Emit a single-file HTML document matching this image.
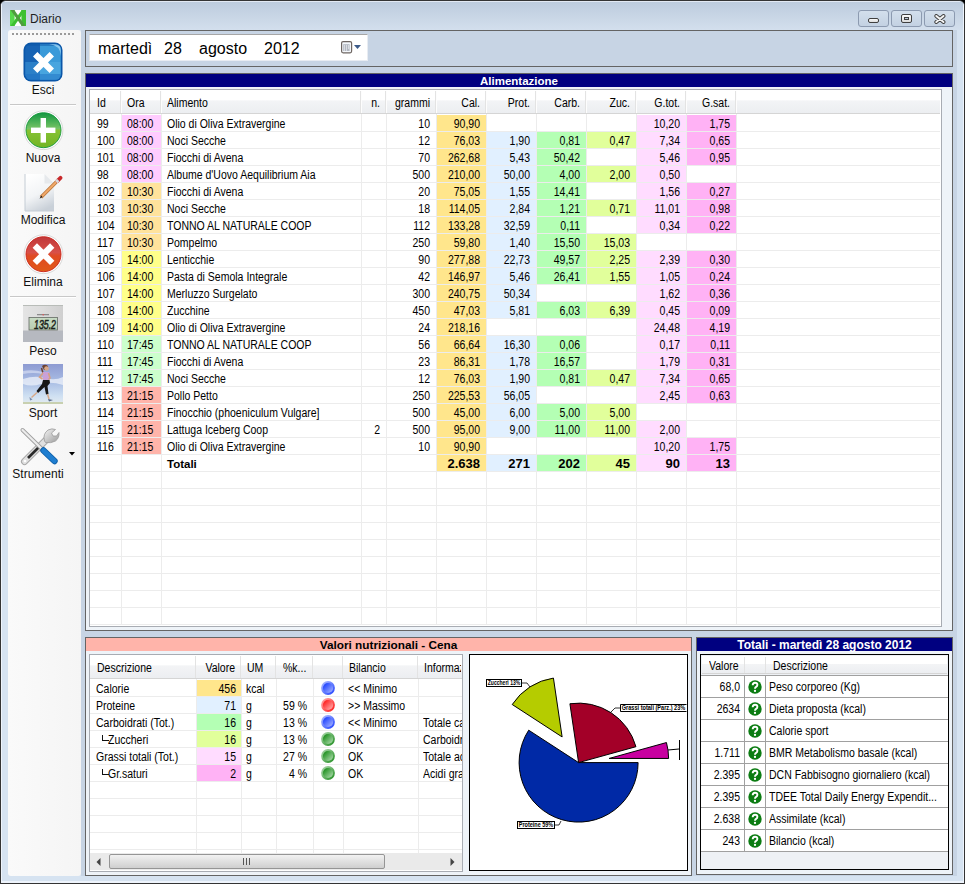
<!DOCTYPE html><html><head><meta charset="utf-8"><style>
*{box-sizing:border-box;margin:0;padding:0}
html,body{width:965px;height:884px;overflow:hidden;background:#000;font-family:"Liberation Sans", sans-serif;color:#000}
.a{position:absolute}
.t{position:absolute;white-space:pre;line-height:16px;font-size:12px;padding-top:1px;transform:scaleX(0.875);transform-origin:0 0}
.t.r{transform-origin:100% 0}
.t.c{transform-origin:50% 0}
.t.n{transform:none}
.r{text-align:right}
.c{text-align:center}
.hd{position:absolute;background:linear-gradient(#fff 0,#fff 45%,#f3f4f6 46%,#eceef1 100%)}
</style></head><body>
<div class="a" style="left:0;top:0;width:965px;height:884px;border:1px solid #343434;border-radius:6px 6px 0 0;background:#d6e3f1;overflow:hidden">
<div class="a" style="left:0;top:0;width:963px;height:29px;background:linear-gradient(#bccbdd,#d3dfed)"></div>
<div class="a" style="left:4px;top:0;width:955px;height:1px;background:#e2e9f3"></div>
<div class="a" style="left:0;top:0;width:1px;height:882px;background:#eef4fc"></div>
<div class="a" style="left:962px;top:0;width:1px;height:882px;background:#eef4fc"></div>
<div class="a" style="left:0;top:880px;width:963px;height:2px;background:#eef4fc"></div>
</div>
<svg class="a" style="left:10px;top:10px" width="16" height="16" viewBox="0 0 16 16">
<rect x="0" y="0" width="16" height="16" fill="#fff"/>
<rect x="0" y="0" width="4.6" height="16" fill="#56d84b"/><rect x="11.4" y="0" width="4.6" height="16" fill="#3cc031"/>
<path d="M0.5 16 L4.3 16 L15.5 0 L11.7 0 Z" fill="#3cc031"/>
<path d="M0.5 0 L4.3 0 L15.5 16 L11.7 16 Z" fill="#4f9c3f"/>
</svg>
<div class="t n" style="left:30px;top:10px;font-size:12px;line-height:16px;color:#1e1e1e">Diario</div>
<div class="a" style="left:858px;top:10px;width:31px;height:17px;border:1px solid #8c9ab0;border-radius:3px;background:linear-gradient(#d3dfec,#c3d1e2)"><div class="a" style="left:9px;top:7px;width:11px;height:5px;background:linear-gradient(#fafafa,#dcdcdc);border:1px solid #404040;border-radius:2px"></div></div>
<div class="a" style="left:891px;top:10px;width:31px;height:17px;border:1px solid #8c9ab0;border-radius:3px;background:linear-gradient(#d3dfec,#c3d1e2)"><div class="a" style="left:9px;top:3px;width:11px;height:9px;border:1px solid #404040;border-radius:2px;background:linear-gradient(#fafafa,#dcdcdc)"><div class="a" style="left:2px;top:2px;width:5px;height:3px;border:1px solid #404040;background:#b8c4d4"></div></div></div>
<div class="a" style="left:924px;top:10px;width:31px;height:17px;border:1px solid #8c9ab0;border-radius:3px;background:linear-gradient(#d3dfec,#c3d1e2)"><svg class="a" style="left:9px;top:3px" width="12" height="10" viewBox="0 0 12 10"><path d="M2.3 2 L9.5 8 M9.5 2 L2.3 8" stroke="#404040" stroke-width="3.9" stroke-linecap="round"/><path d="M2.3 2 L9.5 8 M9.5 2 L2.3 8" stroke="#f4f4f4" stroke-width="2" stroke-linecap="round"/></svg></div>
<div class="a" style="left:81px;top:30px;width:876px;height:846px;background:#c7d4e4"></div>
<div class="a" style="left:8px;top:30px;width:73px;height:846px;border-radius:3px;background:linear-gradient(90deg,#fafafa,#f5f5f5)"></div>
<div class="a" style="left:12px;top:33px;width:62px;height:2px;background:repeating-linear-gradient(90deg,#9a9a9a 0,#9a9a9a 2px,transparent 2px,transparent 4px)"></div>
<div class="a" style="left:10px;top:104px;width:66px;height:1px;background:#c8c8c8"></div><div class="a" style="left:10px;top:105px;width:66px;height:1px;background:#fff"></div>
<div class="a" style="left:10px;top:296px;width:66px;height:1px;background:#c8c8c8"></div><div class="a" style="left:10px;top:297px;width:66px;height:1px;background:#fff"></div>
<svg class="a" style="left:23px;top:42px" width="40" height="40" viewBox="0 0 40 40">
<defs><clipPath id="ec"><rect x="2.2" y="2.2" width="35.6" height="35.6" rx="5.5"/></clipPath>
<linearGradient id="eh" x1="0" y1="0" x2="1" y2="1"><stop offset="0" stop-color="#fff" stop-opacity="0"/><stop offset="1" stop-color="#fff" stop-opacity="0.35"/></linearGradient></defs>
<rect x="0.5" y="0.5" width="39" height="39" rx="7.5" fill="#0a56a8"/>
<g clip-path="url(#ec)">
<rect x="0" y="0" width="17" height="20" fill="#1763b4"/>
<rect x="17" y="0" width="23" height="20" fill="#3a9ad9"/>
<rect x="0" y="20" width="17" height="20" fill="#2c80c8"/>
<rect x="17" y="20" width="23" height="20" fill="#48a5df"/>
<rect x="0" y="32" width="40" height="8" fill="#1a6cc0" opacity="0.45"/>
<rect x="0" y="0" width="40" height="4" fill="#0d58a8" opacity="0.5"/>
<path d="M26 2 Q37 3 38 14 L38 2 Z" fill="#9fd6f6" opacity="0.8"/>
</g>
<path d="M12.2 12.2 L28.8 28.8 M28.8 12.2 L12.2 28.8" stroke="#fff" stroke-width="6.2"/>
</svg>
<div class="t c n" style="left:3px;top:81px;width:80px;font-size:12px;line-height:16px;color:#111">Esci</div>
<svg class="a" style="left:23px;top:110px" width="41" height="41" viewBox="0 0 41 41">
<defs><linearGradient id="ng" x1="0" y1="0" x2="0" y2="1"><stop offset="0" stop-color="#119640"/><stop offset="0.46" stop-color="#78c466"/><stop offset="0.5" stop-color="#86c234"/><stop offset="1" stop-color="#72b424"/></linearGradient></defs>
<circle cx="20.5" cy="20.2" r="19.4" fill="#fff" stroke="#cfcfcf" stroke-width="0.8"/>
<circle cx="20.5" cy="20.2" r="17.5" fill="url(#ng)" stroke="#12963a" stroke-width="0.9"/>
<rect x="17.6" y="8" width="5.4" height="24.6" fill="#fff"/>
<rect x="8" y="17.6" width="24.4" height="5.4" fill="#fff"/>
</svg>
<div class="t c n" style="left:3px;top:149px;width:80px;font-size:12px;line-height:16px;color:#111">Nuova</div>
<svg class="a" style="left:23px;top:173px" width="40" height="40" viewBox="0 0 40 40">
<defs><linearGradient id="mg" x1="0.2" y1="0" x2="0.6" y2="1"><stop offset="0" stop-color="#ffffff"/><stop offset="0.55" stop-color="#f2f4f6"/><stop offset="1" stop-color="#c9d0d8"/></linearGradient></defs>
<path d="M2 1 L21.5 1 L31 10.5 L31 38 L2 38 Z" fill="url(#mg)"/>
<path d="M2 1 L2 38 L31 38" fill="none" stroke="#c4ccd4" stroke-width="1"/>
<path d="M21.5 1 L21.5 10.5 L31 10.5 Z" fill="#e6e9ec"/>
<path d="M18 24.3 L35.5 6.8" stroke="#b8743a" stroke-width="3.6" stroke-linecap="butt"/>
<path d="M18 24.3 L35.5 6.8" stroke="#f0a868" stroke-width="2"/>
<path d="M34.5 7.8 L37.5 4.8" stroke="#c8282a" stroke-width="3.8" stroke-linecap="round"/>
<path d="M33.2 9.1 L35.2 7.1" stroke="#d8d8d8" stroke-width="3.6"/>
<path d="M16.5 25.8 L18.3 22.6 L19.6 24.0 Z" fill="#222"/>
</svg>
<div class="t c n" style="left:3px;top:211px;width:80px;font-size:12px;line-height:16px;color:#111">Modifica</div>
<svg class="a" style="left:23px;top:234px" width="41" height="41" viewBox="0 0 41 41">
<defs><linearGradient id="rg" x1="0" y1="0" x2="0" y2="1"><stop offset="0" stop-color="#c0383a"/><stop offset="0.45" stop-color="#d85048"/><stop offset="0.55" stop-color="#e04a22"/><stop offset="1" stop-color="#e05a18"/></linearGradient></defs>
<circle cx="20.5" cy="20.2" r="19.4" fill="#fff" stroke="#cfcfcf" stroke-width="0.8"/>
<circle cx="20.5" cy="20.2" r="17.5" fill="url(#rg)" stroke="#c8241a" stroke-width="0.9"/>
<path d="M11.8 11.5 L29.2 28.9 M29.2 11.5 L11.8 28.9" stroke="#fff" stroke-width="6.2"/>
</svg>
<div class="t c n" style="left:3px;top:273px;width:80px;font-size:12px;line-height:16px;color:#111">Elimina</div>
<svg class="a" style="left:23px;top:305px" width="40" height="37" viewBox="0 0 40 37">
<defs><linearGradient id="pg" x1="0" y1="0" x2="1" y2="0"><stop offset="0" stop-color="#e4e4e4"/><stop offset="0.5" stop-color="#dcdcdc"/><stop offset="1" stop-color="#cfcfcf"/></linearGradient>
<linearGradient id="pg2" x1="0" y1="0" x2="0" y2="1"><stop offset="0" stop-color="#c8dcc4"/><stop offset="1" stop-color="#b8ccb0"/></linearGradient></defs>
<rect width="40" height="37" fill="url(#pg)"/>
<rect x="0" y="0" width="40" height="1" fill="#b8bcb8"/>
<rect x="0" y="25.5" width="40" height="11.5" fill="#b6b9c0"/>
<rect x="14" y="9.2" width="12" height="1" fill="#777"/><rect x="19.5" y="9" width="1.5" height="1.4" fill="#d06060"/>
<rect x="6" y="12.5" width="28.5" height="12.5" fill="url(#pg2)" stroke="#646a64" stroke-width="0.8"/>
<text x="22" y="24" font-family="Liberation Sans" font-size="12.5" font-style="italic" text-anchor="middle" fill="#1a221a" textLength="22" lengthAdjust="spacingAndGlyphs" stroke="#1a221a" stroke-width="0.5">135.2</text>
</svg>
<div class="t c n" style="left:3px;top:342px;width:80px;font-size:12px;line-height:16px;color:#111">Peso</div>
<svg class="a" style="left:23px;top:364px" width="40" height="40" viewBox="0 0 40 40">
<defs><linearGradient id="sg" x1="0" y1="0" x2="0" y2="1"><stop offset="0" stop-color="#8e9bd2"/><stop offset="0.45" stop-color="#a9bde4"/><stop offset="0.8" stop-color="#cfe0f2"/><stop offset="1" stop-color="#e4ecf0"/></linearGradient></defs>
<rect width="40" height="40" fill="url(#sg)"/>
<path d="M0 15 Q12 11 22 14 T40 13 L40 21 Q28 17 18 20 T0 20Z" fill="#eef2fa" opacity="0.75"/>
<path d="M0 7 Q10 5 20 8 L20 10 Q10 8 0 10Z" fill="#dfe6f6" opacity="0.6"/>
<path d="M19 2 Q22 -0.5 25 2 L25 6 L21 6 Z" fill="#6a4030"/>
<circle cx="23.5" cy="4.5" r="2.3" fill="#d8a888"/>
<path d="M18.5 4 L20 9" stroke="#6a4030" stroke-width="1.5"/>
<path d="M19.5 8 L26 8 L26.5 16 L20 16 Z" fill="#c9a0d8"/>
<path d="M20 9 L16.5 13 L19.5 15" stroke="#d8a080" stroke-width="1.6" fill="none"/>
<path d="M25.5 9 L27 14 L25.5 15.5" stroke="#d8a080" stroke-width="1.6" fill="none"/>
<path d="M20 16 L26.5 16 L27 19 L24.5 22 L25.5 30 L23 30.5 L21.5 23 L15 29 L13.5 27 L19 20 Z" fill="#161616"/>
<path d="M14 28.5 L8.5 33.5" stroke="#d8a888" stroke-width="1.5"/>
<path d="M24.5 30 L26 35" stroke="#d8a888" stroke-width="1.5"/>
<path d="M6.5 33 L9.5 35.5 L7 36.5 Z" fill="#7a8aa8"/>
<path d="M25 35 L30 36 L26 37.5 Z" fill="#5a6a88"/>
<rect x="0" y="38" width="40" height="2" fill="#c8d0b0"/>
</svg>
<div class="t c n" style="left:3px;top:404px;width:80px;font-size:12px;line-height:16px;color:#111">Sport</div>
<svg class="a" style="left:18px;top:424px" width="44" height="42" viewBox="0 0 44 42">
<defs><linearGradient id="wg" x1="0" y1="0" x2="1" y2="1"><stop offset="0" stop-color="#f4f4f4"/><stop offset="1" stop-color="#9a9a9a"/></linearGradient></defs>
<path d="M6.5 37.5 L28 16" stroke="#a8a8a8" stroke-width="7" stroke-linecap="round"/>
<path d="M6.5 37.5 L28 16" stroke="#e0e0e0" stroke-width="5" stroke-linecap="round"/>
<path d="M10 34 L22.5 21.5" stroke="#2a2a2a" stroke-width="2.6"/>
<circle cx="7" cy="37" r="1.3" fill="#fff"/>
<path d="M26.5 17 Q24.5 10 30 6 Q34 4 37.5 5.5 L33.5 9 L35 12 L38.5 12 L41 8.5 Q41.5 14 37.5 17 Q33 19.5 27.5 18.5 Z" fill="url(#wg)" stroke="#9a9a9a" stroke-width="0.8"/>
<path d="M4.5 6 L25 26" stroke="#a0a0a0" stroke-width="4" stroke-linecap="round"/>
<path d="M4.5 6 L25 26" stroke="#ececec" stroke-width="2.2" stroke-linecap="round"/>
<path d="M25.5 26.5 L36.5 37" stroke="#0f5fa8" stroke-width="6.4" stroke-linecap="round"/>
<path d="M25.5 26.5 L36.5 37" stroke="#1f7ed0" stroke-width="4.6" stroke-linecap="round"/>
</svg>
<svg class="a" style="left:68.5px;top:452px" width="6" height="4" viewBox="0 0 6 4"><path d="M0 0 L6 0 L3 3.5Z" fill="#000"/></svg>
<div class="t c n" style="left:-2px;top:465px;width:80px;font-size:12px;line-height:16px;color:#111">Strumenti</div>
<div class="a" style="left:85px;top:30px;width:868px;height:37px;border:1px solid #646464;background:#c7d4e4"></div>
<div class="a" style="left:89px;top:34px;width:279px;height:27px;background:#fff;border-top:1px solid #a6a6a6;border-left:1px solid #e3e3e3;border-right:1px solid #e8ecf2;border-bottom:1px solid #e8ecf2"></div>
<div class="t n" style="left:98px;top:38px;font-size:16px;line-height:20px;color:#000">martedì</div>
<div class="t n" style="left:164px;top:38px;font-size:16px;line-height:20px;color:#000">28</div>
<div class="t n" style="left:199px;top:38px;font-size:16px;line-height:20px;color:#000">agosto</div>
<div class="t n" style="left:264px;top:38px;font-size:16px;line-height:20px;color:#000">2012</div>
<svg class="a" style="left:341px;top:41px" width="21" height="13" viewBox="0 0 21 13">
<rect x="0.6" y="0.6" width="10" height="11.2" rx="1.5" fill="#f4f7fb" stroke="#6e6662" stroke-width="1.2"/>
<rect x="2.2" y="3.2" width="6.4" height="6.8" fill="#b4b9c2"/>
<path d="M3 4.4h1v1h-1zM5 4.4h1v1h-1zM7 4.4h1v1h-1zM3 6.6h1v1h-1zM5 6.6h1v1h-1zM7 6.6h1v1h-1zM3 8.6h1v1h-1zM5 8.6h1v1h-1z" fill="#fff"/>
<path d="M13 4 L20 4 L16.5 8 Z" fill="#3c5a88"/>
</svg>
<div class="a" style="left:85px;top:73px;width:868px;height:558px;border:1px solid #646464;background:#eef3f8"></div>
<div class="a" style="left:86px;top:74px;width:866px;height:13px;background:#000080"></div>
<div class="t c n" style="left:86px;top:73px;width:866px;font-size:11.5px;line-height:15px;font-weight:bold;color:#fff">Alimentazione</div>
<div class="a" style="left:89px;top:89px;width:853px;height:538px;border:1px solid #a8acb3;background:#fff"></div>
<div class="hd" style="left:90px;top:90px;width:850px;height:23px"></div>
<div class="a" style="left:90px;top:113px;width:850px;height:1px;background:#d5d5d5"></div>
<div class="a" style="left:120px;top:91px;width:1px;height:22px;background:#e3e3e3"></div>
<div class="a" style="left:121px;top:91px;width:1px;height:22px;background:#fdfdfd"></div>
<div class="a" style="left:160px;top:91px;width:1px;height:22px;background:#e3e3e3"></div>
<div class="a" style="left:161px;top:91px;width:1px;height:22px;background:#fdfdfd"></div>
<div class="a" style="left:360px;top:91px;width:1px;height:22px;background:#e3e3e3"></div>
<div class="a" style="left:361px;top:91px;width:1px;height:22px;background:#fdfdfd"></div>
<div class="a" style="left:385px;top:91px;width:1px;height:22px;background:#e3e3e3"></div>
<div class="a" style="left:386px;top:91px;width:1px;height:22px;background:#fdfdfd"></div>
<div class="a" style="left:435px;top:91px;width:1px;height:22px;background:#e3e3e3"></div>
<div class="a" style="left:436px;top:91px;width:1px;height:22px;background:#fdfdfd"></div>
<div class="a" style="left:485px;top:91px;width:1px;height:22px;background:#e3e3e3"></div>
<div class="a" style="left:486px;top:91px;width:1px;height:22px;background:#fdfdfd"></div>
<div class="a" style="left:535px;top:91px;width:1px;height:22px;background:#e3e3e3"></div>
<div class="a" style="left:536px;top:91px;width:1px;height:22px;background:#fdfdfd"></div>
<div class="a" style="left:585px;top:91px;width:1px;height:22px;background:#e3e3e3"></div>
<div class="a" style="left:586px;top:91px;width:1px;height:22px;background:#fdfdfd"></div>
<div class="a" style="left:635px;top:91px;width:1px;height:22px;background:#e3e3e3"></div>
<div class="a" style="left:636px;top:91px;width:1px;height:22px;background:#fdfdfd"></div>
<div class="a" style="left:685px;top:91px;width:1px;height:22px;background:#e3e3e3"></div>
<div class="a" style="left:686px;top:91px;width:1px;height:22px;background:#fdfdfd"></div>
<div class="a" style="left:735px;top:91px;width:1px;height:22px;background:#e3e3e3"></div>
<div class="a" style="left:736px;top:91px;width:1px;height:22px;background:#fdfdfd"></div>
<div class="t" style="left:97px;top:94px">Id</div>
<div class="t" style="left:127px;top:94px">Ora</div>
<div class="t" style="left:167px;top:94px">Alimento</div>
<div class="t r" style="left:361px;top:94px;width:19px">n.</div>
<div class="t r" style="left:386px;top:94px;width:44px">grammi</div>
<div class="t r" style="left:436px;top:94px;width:44px">Cal.</div>
<div class="t r" style="left:486px;top:94px;width:44px">Prot.</div>
<div class="t r" style="left:536px;top:94px;width:44px">Carb.</div>
<div class="t r" style="left:586px;top:94px;width:44px">Zuc.</div>
<div class="t r" style="left:636px;top:94px;width:44px">G.tot.</div>
<div class="t r" style="left:686px;top:94px;width:44px">G.sat.</div>
<div class="a" style="left:90px;top:131px;width:850px;height:1px;background:#ececec"></div>
<div class="a" style="left:90px;top:148px;width:850px;height:1px;background:#ececec"></div>
<div class="a" style="left:90px;top:165px;width:850px;height:1px;background:#ececec"></div>
<div class="a" style="left:90px;top:182px;width:850px;height:1px;background:#ececec"></div>
<div class="a" style="left:90px;top:199px;width:850px;height:1px;background:#ececec"></div>
<div class="a" style="left:90px;top:216px;width:850px;height:1px;background:#ececec"></div>
<div class="a" style="left:90px;top:233px;width:850px;height:1px;background:#ececec"></div>
<div class="a" style="left:90px;top:250px;width:850px;height:1px;background:#ececec"></div>
<div class="a" style="left:90px;top:267px;width:850px;height:1px;background:#ececec"></div>
<div class="a" style="left:90px;top:284px;width:850px;height:1px;background:#ececec"></div>
<div class="a" style="left:90px;top:301px;width:850px;height:1px;background:#ececec"></div>
<div class="a" style="left:90px;top:318px;width:850px;height:1px;background:#ececec"></div>
<div class="a" style="left:90px;top:335px;width:850px;height:1px;background:#ececec"></div>
<div class="a" style="left:90px;top:352px;width:850px;height:1px;background:#ececec"></div>
<div class="a" style="left:90px;top:369px;width:850px;height:1px;background:#ececec"></div>
<div class="a" style="left:90px;top:386px;width:850px;height:1px;background:#ececec"></div>
<div class="a" style="left:90px;top:403px;width:850px;height:1px;background:#ececec"></div>
<div class="a" style="left:90px;top:420px;width:850px;height:1px;background:#ececec"></div>
<div class="a" style="left:90px;top:437px;width:850px;height:1px;background:#ececec"></div>
<div class="a" style="left:90px;top:454px;width:850px;height:1px;background:#ececec"></div>
<div class="a" style="left:90px;top:471px;width:850px;height:1px;background:#ececec"></div>
<div class="a" style="left:90px;top:488px;width:850px;height:1px;background:#ececec"></div>
<div class="a" style="left:90px;top:505px;width:850px;height:1px;background:#ececec"></div>
<div class="a" style="left:90px;top:522px;width:850px;height:1px;background:#ececec"></div>
<div class="a" style="left:90px;top:539px;width:850px;height:1px;background:#ececec"></div>
<div class="a" style="left:90px;top:556px;width:850px;height:1px;background:#ececec"></div>
<div class="a" style="left:90px;top:573px;width:850px;height:1px;background:#ececec"></div>
<div class="a" style="left:90px;top:590px;width:850px;height:1px;background:#ececec"></div>
<div class="a" style="left:90px;top:607px;width:850px;height:1px;background:#ececec"></div>
<div class="a" style="left:90px;top:624px;width:850px;height:1px;background:#ececec"></div>
<div class="a" style="left:121px;top:114px;width:1px;height:511px;background:#ececec"></div>
<div class="a" style="left:161px;top:114px;width:1px;height:511px;background:#ececec"></div>
<div class="a" style="left:361px;top:114px;width:1px;height:511px;background:#ececec"></div>
<div class="a" style="left:386px;top:114px;width:1px;height:511px;background:#ececec"></div>
<div class="a" style="left:436px;top:114px;width:1px;height:511px;background:#ececec"></div>
<div class="a" style="left:486px;top:114px;width:1px;height:511px;background:#ececec"></div>
<div class="a" style="left:536px;top:114px;width:1px;height:511px;background:#ececec"></div>
<div class="a" style="left:586px;top:114px;width:1px;height:511px;background:#ececec"></div>
<div class="a" style="left:636px;top:114px;width:1px;height:511px;background:#ececec"></div>
<div class="a" style="left:686px;top:114px;width:1px;height:511px;background:#ececec"></div>
<div class="a" style="left:736px;top:114px;width:1px;height:511px;background:#ececec"></div>
<div class="a" style="left:122px;top:115px;width:39px;height:16px;background:#ffccff"></div>
<div class="a" style="left:437px;top:115px;width:49px;height:16px;background:#ffe68c"></div>
<div class="a" style="left:637px;top:115px;width:49px;height:16px;background:#ffdcff"></div>
<div class="a" style="left:687px;top:115px;width:49px;height:16px;background:#ffb2f5"></div>
<div class="t" style="left:97px;top:115px">99</div>
<div class="t" style="left:127px;top:115px">08:00</div>
<div class="t" style="left:167px;top:115px">Olio di Oliva Extravergine</div>
<div class="t r" style="left:387px;top:115px;width:43px">10</div>
<div class="t r" style="left:437px;top:115px;width:43px">90,90</div>
<div class="t r" style="left:637px;top:115px;width:43px">10,20</div>
<div class="t r" style="left:687px;top:115px;width:43px">1,75</div>
<div class="a" style="left:122px;top:132px;width:39px;height:16px;background:#ffccff"></div>
<div class="a" style="left:437px;top:132px;width:49px;height:16px;background:#ffe68c"></div>
<div class="a" style="left:487px;top:132px;width:49px;height:16px;background:#e1f0ff"></div>
<div class="a" style="left:537px;top:132px;width:49px;height:16px;background:#b4ffb4"></div>
<div class="a" style="left:587px;top:132px;width:49px;height:16px;background:#e1ff9b"></div>
<div class="a" style="left:637px;top:132px;width:49px;height:16px;background:#ffdcff"></div>
<div class="a" style="left:687px;top:132px;width:49px;height:16px;background:#ffb2f5"></div>
<div class="t" style="left:97px;top:132px">100</div>
<div class="t" style="left:127px;top:132px">08:00</div>
<div class="t" style="left:167px;top:132px">Noci Secche</div>
<div class="t r" style="left:387px;top:132px;width:43px">12</div>
<div class="t r" style="left:437px;top:132px;width:43px">76,03</div>
<div class="t r" style="left:487px;top:132px;width:43px">1,90</div>
<div class="t r" style="left:537px;top:132px;width:43px">0,81</div>
<div class="t r" style="left:587px;top:132px;width:43px">0,47</div>
<div class="t r" style="left:637px;top:132px;width:43px">7,34</div>
<div class="t r" style="left:687px;top:132px;width:43px">0,65</div>
<div class="a" style="left:122px;top:149px;width:39px;height:16px;background:#ffccff"></div>
<div class="a" style="left:437px;top:149px;width:49px;height:16px;background:#ffe68c"></div>
<div class="a" style="left:487px;top:149px;width:49px;height:16px;background:#e1f0ff"></div>
<div class="a" style="left:537px;top:149px;width:49px;height:16px;background:#b4ffb4"></div>
<div class="a" style="left:637px;top:149px;width:49px;height:16px;background:#ffdcff"></div>
<div class="a" style="left:687px;top:149px;width:49px;height:16px;background:#ffb2f5"></div>
<div class="t" style="left:97px;top:149px">101</div>
<div class="t" style="left:127px;top:149px">08:00</div>
<div class="t" style="left:167px;top:149px">Fiocchi di Avena</div>
<div class="t r" style="left:387px;top:149px;width:43px">70</div>
<div class="t r" style="left:437px;top:149px;width:43px">262,68</div>
<div class="t r" style="left:487px;top:149px;width:43px">5,43</div>
<div class="t r" style="left:537px;top:149px;width:43px">50,42</div>
<div class="t r" style="left:637px;top:149px;width:43px">5,46</div>
<div class="t r" style="left:687px;top:149px;width:43px">0,95</div>
<div class="a" style="left:122px;top:166px;width:39px;height:16px;background:#ffccff"></div>
<div class="a" style="left:437px;top:166px;width:49px;height:16px;background:#ffe68c"></div>
<div class="a" style="left:487px;top:166px;width:49px;height:16px;background:#e1f0ff"></div>
<div class="a" style="left:537px;top:166px;width:49px;height:16px;background:#b4ffb4"></div>
<div class="a" style="left:587px;top:166px;width:49px;height:16px;background:#e1ff9b"></div>
<div class="a" style="left:637px;top:166px;width:49px;height:16px;background:#ffdcff"></div>
<div class="t" style="left:97px;top:166px">98</div>
<div class="t" style="left:127px;top:166px">08:00</div>
<div class="t" style="left:167px;top:166px">Albume d&#x27;Uovo Aequilibrium Aia</div>
<div class="t r" style="left:387px;top:166px;width:43px">500</div>
<div class="t r" style="left:437px;top:166px;width:43px">210,00</div>
<div class="t r" style="left:487px;top:166px;width:43px">50,00</div>
<div class="t r" style="left:537px;top:166px;width:43px">4,00</div>
<div class="t r" style="left:587px;top:166px;width:43px">2,00</div>
<div class="t r" style="left:637px;top:166px;width:43px">0,50</div>
<div class="a" style="left:122px;top:183px;width:39px;height:16px;background:#ffe39c"></div>
<div class="a" style="left:437px;top:183px;width:49px;height:16px;background:#ffe68c"></div>
<div class="a" style="left:487px;top:183px;width:49px;height:16px;background:#e1f0ff"></div>
<div class="a" style="left:537px;top:183px;width:49px;height:16px;background:#b4ffb4"></div>
<div class="a" style="left:637px;top:183px;width:49px;height:16px;background:#ffdcff"></div>
<div class="a" style="left:687px;top:183px;width:49px;height:16px;background:#ffb2f5"></div>
<div class="t" style="left:97px;top:183px">102</div>
<div class="t" style="left:127px;top:183px">10:30</div>
<div class="t" style="left:167px;top:183px">Fiocchi di Avena</div>
<div class="t r" style="left:387px;top:183px;width:43px">20</div>
<div class="t r" style="left:437px;top:183px;width:43px">75,05</div>
<div class="t r" style="left:487px;top:183px;width:43px">1,55</div>
<div class="t r" style="left:537px;top:183px;width:43px">14,41</div>
<div class="t r" style="left:637px;top:183px;width:43px">1,56</div>
<div class="t r" style="left:687px;top:183px;width:43px">0,27</div>
<div class="a" style="left:122px;top:200px;width:39px;height:16px;background:#ffe39c"></div>
<div class="a" style="left:437px;top:200px;width:49px;height:16px;background:#ffe68c"></div>
<div class="a" style="left:487px;top:200px;width:49px;height:16px;background:#e1f0ff"></div>
<div class="a" style="left:537px;top:200px;width:49px;height:16px;background:#b4ffb4"></div>
<div class="a" style="left:587px;top:200px;width:49px;height:16px;background:#e1ff9b"></div>
<div class="a" style="left:637px;top:200px;width:49px;height:16px;background:#ffdcff"></div>
<div class="a" style="left:687px;top:200px;width:49px;height:16px;background:#ffb2f5"></div>
<div class="t" style="left:97px;top:200px">103</div>
<div class="t" style="left:127px;top:200px">10:30</div>
<div class="t" style="left:167px;top:200px">Noci Secche</div>
<div class="t r" style="left:387px;top:200px;width:43px">18</div>
<div class="t r" style="left:437px;top:200px;width:43px">114,05</div>
<div class="t r" style="left:487px;top:200px;width:43px">2,84</div>
<div class="t r" style="left:537px;top:200px;width:43px">1,21</div>
<div class="t r" style="left:587px;top:200px;width:43px">0,71</div>
<div class="t r" style="left:637px;top:200px;width:43px">11,01</div>
<div class="t r" style="left:687px;top:200px;width:43px">0,98</div>
<div class="a" style="left:122px;top:217px;width:39px;height:16px;background:#ffe39c"></div>
<div class="a" style="left:437px;top:217px;width:49px;height:16px;background:#ffe68c"></div>
<div class="a" style="left:487px;top:217px;width:49px;height:16px;background:#e1f0ff"></div>
<div class="a" style="left:537px;top:217px;width:49px;height:16px;background:#b4ffb4"></div>
<div class="a" style="left:637px;top:217px;width:49px;height:16px;background:#ffdcff"></div>
<div class="a" style="left:687px;top:217px;width:49px;height:16px;background:#ffb2f5"></div>
<div class="t" style="left:97px;top:217px">104</div>
<div class="t" style="left:127px;top:217px">10:30</div>
<div class="t" style="left:167px;top:217px">TONNO AL NATURALE COOP</div>
<div class="t r" style="left:387px;top:217px;width:43px">112</div>
<div class="t r" style="left:437px;top:217px;width:43px">133,28</div>
<div class="t r" style="left:487px;top:217px;width:43px">32,59</div>
<div class="t r" style="left:537px;top:217px;width:43px">0,11</div>
<div class="t r" style="left:637px;top:217px;width:43px">0,34</div>
<div class="t r" style="left:687px;top:217px;width:43px">0,22</div>
<div class="a" style="left:122px;top:234px;width:39px;height:16px;background:#ffe39c"></div>
<div class="a" style="left:437px;top:234px;width:49px;height:16px;background:#ffe68c"></div>
<div class="a" style="left:487px;top:234px;width:49px;height:16px;background:#e1f0ff"></div>
<div class="a" style="left:537px;top:234px;width:49px;height:16px;background:#b4ffb4"></div>
<div class="a" style="left:587px;top:234px;width:49px;height:16px;background:#e1ff9b"></div>
<div class="t" style="left:97px;top:234px">117</div>
<div class="t" style="left:127px;top:234px">10:30</div>
<div class="t" style="left:167px;top:234px">Pompelmo</div>
<div class="t r" style="left:387px;top:234px;width:43px">250</div>
<div class="t r" style="left:437px;top:234px;width:43px">59,80</div>
<div class="t r" style="left:487px;top:234px;width:43px">1,40</div>
<div class="t r" style="left:537px;top:234px;width:43px">15,50</div>
<div class="t r" style="left:587px;top:234px;width:43px">15,03</div>
<div class="a" style="left:122px;top:251px;width:39px;height:16px;background:#ffff8a"></div>
<div class="a" style="left:437px;top:251px;width:49px;height:16px;background:#ffe68c"></div>
<div class="a" style="left:487px;top:251px;width:49px;height:16px;background:#e1f0ff"></div>
<div class="a" style="left:537px;top:251px;width:49px;height:16px;background:#b4ffb4"></div>
<div class="a" style="left:587px;top:251px;width:49px;height:16px;background:#e1ff9b"></div>
<div class="a" style="left:637px;top:251px;width:49px;height:16px;background:#ffdcff"></div>
<div class="a" style="left:687px;top:251px;width:49px;height:16px;background:#ffb2f5"></div>
<div class="t" style="left:97px;top:251px">105</div>
<div class="t" style="left:127px;top:251px">14:00</div>
<div class="t" style="left:167px;top:251px">Lenticchie</div>
<div class="t r" style="left:387px;top:251px;width:43px">90</div>
<div class="t r" style="left:437px;top:251px;width:43px">277,88</div>
<div class="t r" style="left:487px;top:251px;width:43px">22,73</div>
<div class="t r" style="left:537px;top:251px;width:43px">49,57</div>
<div class="t r" style="left:587px;top:251px;width:43px">2,25</div>
<div class="t r" style="left:637px;top:251px;width:43px">2,39</div>
<div class="t r" style="left:687px;top:251px;width:43px">0,30</div>
<div class="a" style="left:122px;top:268px;width:39px;height:16px;background:#ffff8a"></div>
<div class="a" style="left:437px;top:268px;width:49px;height:16px;background:#ffe68c"></div>
<div class="a" style="left:487px;top:268px;width:49px;height:16px;background:#e1f0ff"></div>
<div class="a" style="left:537px;top:268px;width:49px;height:16px;background:#b4ffb4"></div>
<div class="a" style="left:587px;top:268px;width:49px;height:16px;background:#e1ff9b"></div>
<div class="a" style="left:637px;top:268px;width:49px;height:16px;background:#ffdcff"></div>
<div class="a" style="left:687px;top:268px;width:49px;height:16px;background:#ffb2f5"></div>
<div class="t" style="left:97px;top:268px">106</div>
<div class="t" style="left:127px;top:268px">14:00</div>
<div class="t" style="left:167px;top:268px">Pasta di Semola Integrale</div>
<div class="t r" style="left:387px;top:268px;width:43px">42</div>
<div class="t r" style="left:437px;top:268px;width:43px">146,97</div>
<div class="t r" style="left:487px;top:268px;width:43px">5,46</div>
<div class="t r" style="left:537px;top:268px;width:43px">26,41</div>
<div class="t r" style="left:587px;top:268px;width:43px">1,55</div>
<div class="t r" style="left:637px;top:268px;width:43px">1,05</div>
<div class="t r" style="left:687px;top:268px;width:43px">0,24</div>
<div class="a" style="left:122px;top:285px;width:39px;height:16px;background:#ffff8a"></div>
<div class="a" style="left:437px;top:285px;width:49px;height:16px;background:#ffe68c"></div>
<div class="a" style="left:487px;top:285px;width:49px;height:16px;background:#e1f0ff"></div>
<div class="a" style="left:637px;top:285px;width:49px;height:16px;background:#ffdcff"></div>
<div class="a" style="left:687px;top:285px;width:49px;height:16px;background:#ffb2f5"></div>
<div class="t" style="left:97px;top:285px">107</div>
<div class="t" style="left:127px;top:285px">14:00</div>
<div class="t" style="left:167px;top:285px">Merluzzo Surgelato</div>
<div class="t r" style="left:387px;top:285px;width:43px">300</div>
<div class="t r" style="left:437px;top:285px;width:43px">240,75</div>
<div class="t r" style="left:487px;top:285px;width:43px">50,34</div>
<div class="t r" style="left:637px;top:285px;width:43px">1,62</div>
<div class="t r" style="left:687px;top:285px;width:43px">0,36</div>
<div class="a" style="left:122px;top:302px;width:39px;height:16px;background:#ffff8a"></div>
<div class="a" style="left:437px;top:302px;width:49px;height:16px;background:#ffe68c"></div>
<div class="a" style="left:487px;top:302px;width:49px;height:16px;background:#e1f0ff"></div>
<div class="a" style="left:537px;top:302px;width:49px;height:16px;background:#b4ffb4"></div>
<div class="a" style="left:587px;top:302px;width:49px;height:16px;background:#e1ff9b"></div>
<div class="a" style="left:637px;top:302px;width:49px;height:16px;background:#ffdcff"></div>
<div class="a" style="left:687px;top:302px;width:49px;height:16px;background:#ffb2f5"></div>
<div class="t" style="left:97px;top:302px">108</div>
<div class="t" style="left:127px;top:302px">14:00</div>
<div class="t" style="left:167px;top:302px">Zucchine</div>
<div class="t r" style="left:387px;top:302px;width:43px">450</div>
<div class="t r" style="left:437px;top:302px;width:43px">47,03</div>
<div class="t r" style="left:487px;top:302px;width:43px">5,81</div>
<div class="t r" style="left:537px;top:302px;width:43px">6,03</div>
<div class="t r" style="left:587px;top:302px;width:43px">6,39</div>
<div class="t r" style="left:637px;top:302px;width:43px">0,45</div>
<div class="t r" style="left:687px;top:302px;width:43px">0,09</div>
<div class="a" style="left:122px;top:319px;width:39px;height:16px;background:#ffff8a"></div>
<div class="a" style="left:437px;top:319px;width:49px;height:16px;background:#ffe68c"></div>
<div class="a" style="left:637px;top:319px;width:49px;height:16px;background:#ffdcff"></div>
<div class="a" style="left:687px;top:319px;width:49px;height:16px;background:#ffb2f5"></div>
<div class="t" style="left:97px;top:319px">109</div>
<div class="t" style="left:127px;top:319px">14:00</div>
<div class="t" style="left:167px;top:319px">Olio di Oliva Extravergine</div>
<div class="t r" style="left:387px;top:319px;width:43px">24</div>
<div class="t r" style="left:437px;top:319px;width:43px">218,16</div>
<div class="t r" style="left:637px;top:319px;width:43px">24,48</div>
<div class="t r" style="left:687px;top:319px;width:43px">4,19</div>
<div class="a" style="left:122px;top:336px;width:39px;height:16px;background:#ccffcc"></div>
<div class="a" style="left:437px;top:336px;width:49px;height:16px;background:#ffe68c"></div>
<div class="a" style="left:487px;top:336px;width:49px;height:16px;background:#e1f0ff"></div>
<div class="a" style="left:537px;top:336px;width:49px;height:16px;background:#b4ffb4"></div>
<div class="a" style="left:637px;top:336px;width:49px;height:16px;background:#ffdcff"></div>
<div class="a" style="left:687px;top:336px;width:49px;height:16px;background:#ffb2f5"></div>
<div class="t" style="left:97px;top:336px">110</div>
<div class="t" style="left:127px;top:336px">17:45</div>
<div class="t" style="left:167px;top:336px">TONNO AL NATURALE COOP</div>
<div class="t r" style="left:387px;top:336px;width:43px">56</div>
<div class="t r" style="left:437px;top:336px;width:43px">66,64</div>
<div class="t r" style="left:487px;top:336px;width:43px">16,30</div>
<div class="t r" style="left:537px;top:336px;width:43px">0,06</div>
<div class="t r" style="left:637px;top:336px;width:43px">0,17</div>
<div class="t r" style="left:687px;top:336px;width:43px">0,11</div>
<div class="a" style="left:122px;top:353px;width:39px;height:16px;background:#ccffcc"></div>
<div class="a" style="left:437px;top:353px;width:49px;height:16px;background:#ffe68c"></div>
<div class="a" style="left:487px;top:353px;width:49px;height:16px;background:#e1f0ff"></div>
<div class="a" style="left:537px;top:353px;width:49px;height:16px;background:#b4ffb4"></div>
<div class="a" style="left:637px;top:353px;width:49px;height:16px;background:#ffdcff"></div>
<div class="a" style="left:687px;top:353px;width:49px;height:16px;background:#ffb2f5"></div>
<div class="t" style="left:97px;top:353px">111</div>
<div class="t" style="left:127px;top:353px">17:45</div>
<div class="t" style="left:167px;top:353px">Fiocchi di Avena</div>
<div class="t r" style="left:387px;top:353px;width:43px">23</div>
<div class="t r" style="left:437px;top:353px;width:43px">86,31</div>
<div class="t r" style="left:487px;top:353px;width:43px">1,78</div>
<div class="t r" style="left:537px;top:353px;width:43px">16,57</div>
<div class="t r" style="left:637px;top:353px;width:43px">1,79</div>
<div class="t r" style="left:687px;top:353px;width:43px">0,31</div>
<div class="a" style="left:122px;top:370px;width:39px;height:16px;background:#ccffcc"></div>
<div class="a" style="left:437px;top:370px;width:49px;height:16px;background:#ffe68c"></div>
<div class="a" style="left:487px;top:370px;width:49px;height:16px;background:#e1f0ff"></div>
<div class="a" style="left:537px;top:370px;width:49px;height:16px;background:#b4ffb4"></div>
<div class="a" style="left:587px;top:370px;width:49px;height:16px;background:#e1ff9b"></div>
<div class="a" style="left:637px;top:370px;width:49px;height:16px;background:#ffdcff"></div>
<div class="a" style="left:687px;top:370px;width:49px;height:16px;background:#ffb2f5"></div>
<div class="t" style="left:97px;top:370px">112</div>
<div class="t" style="left:127px;top:370px">17:45</div>
<div class="t" style="left:167px;top:370px">Noci Secche</div>
<div class="t r" style="left:387px;top:370px;width:43px">12</div>
<div class="t r" style="left:437px;top:370px;width:43px">76,03</div>
<div class="t r" style="left:487px;top:370px;width:43px">1,90</div>
<div class="t r" style="left:537px;top:370px;width:43px">0,81</div>
<div class="t r" style="left:587px;top:370px;width:43px">0,47</div>
<div class="t r" style="left:637px;top:370px;width:43px">7,34</div>
<div class="t r" style="left:687px;top:370px;width:43px">0,65</div>
<div class="a" style="left:122px;top:387px;width:39px;height:16px;background:#ffb4aa"></div>
<div class="a" style="left:437px;top:387px;width:49px;height:16px;background:#ffe68c"></div>
<div class="a" style="left:487px;top:387px;width:49px;height:16px;background:#e1f0ff"></div>
<div class="a" style="left:637px;top:387px;width:49px;height:16px;background:#ffdcff"></div>
<div class="a" style="left:687px;top:387px;width:49px;height:16px;background:#ffb2f5"></div>
<div class="t" style="left:97px;top:387px">113</div>
<div class="t" style="left:127px;top:387px">21:15</div>
<div class="t" style="left:167px;top:387px">Pollo Petto</div>
<div class="t r" style="left:387px;top:387px;width:43px">250</div>
<div class="t r" style="left:437px;top:387px;width:43px">225,53</div>
<div class="t r" style="left:487px;top:387px;width:43px">56,05</div>
<div class="t r" style="left:637px;top:387px;width:43px">2,45</div>
<div class="t r" style="left:687px;top:387px;width:43px">0,63</div>
<div class="a" style="left:122px;top:404px;width:39px;height:16px;background:#ffb4aa"></div>
<div class="a" style="left:437px;top:404px;width:49px;height:16px;background:#ffe68c"></div>
<div class="a" style="left:487px;top:404px;width:49px;height:16px;background:#e1f0ff"></div>
<div class="a" style="left:537px;top:404px;width:49px;height:16px;background:#b4ffb4"></div>
<div class="a" style="left:587px;top:404px;width:49px;height:16px;background:#e1ff9b"></div>
<div class="t" style="left:97px;top:404px">114</div>
<div class="t" style="left:127px;top:404px">21:15</div>
<div class="t" style="left:167px;top:404px">Finocchio (phoeniculum Vulgare]</div>
<div class="t r" style="left:387px;top:404px;width:43px">500</div>
<div class="t r" style="left:437px;top:404px;width:43px">45,00</div>
<div class="t r" style="left:487px;top:404px;width:43px">6,00</div>
<div class="t r" style="left:537px;top:404px;width:43px">5,00</div>
<div class="t r" style="left:587px;top:404px;width:43px">5,00</div>
<div class="a" style="left:122px;top:421px;width:39px;height:16px;background:#ffb4aa"></div>
<div class="a" style="left:437px;top:421px;width:49px;height:16px;background:#ffe68c"></div>
<div class="a" style="left:487px;top:421px;width:49px;height:16px;background:#e1f0ff"></div>
<div class="a" style="left:537px;top:421px;width:49px;height:16px;background:#b4ffb4"></div>
<div class="a" style="left:587px;top:421px;width:49px;height:16px;background:#e1ff9b"></div>
<div class="a" style="left:637px;top:421px;width:49px;height:16px;background:#ffdcff"></div>
<div class="t" style="left:97px;top:421px">115</div>
<div class="t" style="left:127px;top:421px">21:15</div>
<div class="t" style="left:167px;top:421px">Lattuga Iceberg Coop</div>
<div class="t r" style="left:362px;top:421px;width:18px">2</div>
<div class="t r" style="left:387px;top:421px;width:43px">500</div>
<div class="t r" style="left:437px;top:421px;width:43px">95,00</div>
<div class="t r" style="left:487px;top:421px;width:43px">9,00</div>
<div class="t r" style="left:537px;top:421px;width:43px">11,00</div>
<div class="t r" style="left:587px;top:421px;width:43px">11,00</div>
<div class="t r" style="left:637px;top:421px;width:43px">2,00</div>
<div class="a" style="left:122px;top:438px;width:39px;height:16px;background:#ffb4aa"></div>
<div class="a" style="left:437px;top:438px;width:49px;height:16px;background:#ffe68c"></div>
<div class="a" style="left:637px;top:438px;width:49px;height:16px;background:#ffdcff"></div>
<div class="a" style="left:687px;top:438px;width:49px;height:16px;background:#ffb2f5"></div>
<div class="t" style="left:97px;top:438px">116</div>
<div class="t" style="left:127px;top:438px">21:15</div>
<div class="t" style="left:167px;top:438px">Olio di Oliva Extravergine</div>
<div class="t r" style="left:387px;top:438px;width:43px">10</div>
<div class="t r" style="left:437px;top:438px;width:43px">90,90</div>
<div class="t r" style="left:637px;top:438px;width:43px">10,20</div>
<div class="t r" style="left:687px;top:438px;width:43px">1,75</div>
<div class="a" style="left:437px;top:455px;width:49px;height:16px;background:#ffe68c"></div>
<div class="a" style="left:487px;top:455px;width:49px;height:16px;background:#e1f0ff"></div>
<div class="a" style="left:537px;top:455px;width:49px;height:16px;background:#b4ffb4"></div>
<div class="a" style="left:587px;top:455px;width:49px;height:16px;background:#e1ff9b"></div>
<div class="a" style="left:637px;top:455px;width:49px;height:16px;background:#ffdcff"></div>
<div class="a" style="left:687px;top:455px;width:49px;height:16px;background:#ffb2f5"></div>
<div class="t n" style="left:167px;top:455px;font-weight:bold;font-size:11.5px">Totali</div>
<div class="t r n" style="left:437px;top:454px;width:43px;font-weight:bold;font-size:13px;line-height:17px">2.638</div>
<div class="t r n" style="left:487px;top:454px;width:43px;font-weight:bold;font-size:13px;line-height:17px">271</div>
<div class="t r n" style="left:537px;top:454px;width:43px;font-weight:bold;font-size:13px;line-height:17px">202</div>
<div class="t r n" style="left:587px;top:454px;width:43px;font-weight:bold;font-size:13px;line-height:17px">45</div>
<div class="t r n" style="left:637px;top:454px;width:43px;font-weight:bold;font-size:13px;line-height:17px">90</div>
<div class="t r n" style="left:687px;top:454px;width:43px;font-weight:bold;font-size:13px;line-height:17px">13</div>
<div class="a" style="left:85px;top:637px;width:607px;height:239px;border:1px solid #646464;background:#eef3f8"></div>
<div class="a" style="left:86px;top:638px;width:605px;height:13px;background:#ffb4aa"></div>
<div class="t c n" style="left:86px;top:637px;width:605px;font-size:11.8px;line-height:15px;font-weight:bold;color:#000">Valori nutrizionali - Cena</div>
<div class="a" style="left:89px;top:654px;width:374px;height:218px;border:1px solid #a8acb3;background:#fff"></div>
<div class="hd" style="left:90px;top:655px;width:372px;height:23px"></div>
<div class="a" style="left:90px;top:678px;width:372px;height:1px;background:#d5d5d5"></div>
<div class="a" style="left:195px;top:656px;width:1px;height:22px;background:#e3e3e3"></div>
<div class="a" style="left:196px;top:679px;width:1px;height:174px;background:#ececec"></div>
<div class="a" style="left:240px;top:656px;width:1px;height:22px;background:#e3e3e3"></div>
<div class="a" style="left:241px;top:679px;width:1px;height:174px;background:#ececec"></div>
<div class="a" style="left:275px;top:656px;width:1px;height:22px;background:#e3e3e3"></div>
<div class="a" style="left:276px;top:679px;width:1px;height:174px;background:#ececec"></div>
<div class="a" style="left:312px;top:656px;width:1px;height:22px;background:#e3e3e3"></div>
<div class="a" style="left:313px;top:679px;width:1px;height:174px;background:#ececec"></div>
<div class="a" style="left:342px;top:656px;width:1px;height:22px;background:#e3e3e3"></div>
<div class="a" style="left:343px;top:679px;width:1px;height:174px;background:#ececec"></div>
<div class="a" style="left:417px;top:656px;width:1px;height:22px;background:#e3e3e3"></div>
<div class="a" style="left:418px;top:679px;width:1px;height:174px;background:#ececec"></div>
<div class="a" style="left:90px;top:696px;width:372px;height:1px;background:#ececec"></div>
<div class="a" style="left:90px;top:713px;width:372px;height:1px;background:#ececec"></div>
<div class="a" style="left:90px;top:730px;width:372px;height:1px;background:#ececec"></div>
<div class="a" style="left:90px;top:747px;width:372px;height:1px;background:#ececec"></div>
<div class="a" style="left:90px;top:764px;width:372px;height:1px;background:#ececec"></div>
<div class="a" style="left:90px;top:781px;width:372px;height:1px;background:#ececec"></div>
<div class="a" style="left:90px;top:798px;width:372px;height:1px;background:#ececec"></div>
<div class="a" style="left:90px;top:815px;width:372px;height:1px;background:#ececec"></div>
<div class="a" style="left:90px;top:832px;width:372px;height:1px;background:#ececec"></div>
<div class="a" style="left:90px;top:849px;width:372px;height:1px;background:#ececec"></div>
<div class="a" style="left:90px;top:655px;width:371px;height:23px;overflow:hidden">
<div class="t" style="left:7px;top:4px">Descrizione</div>
<div class="t r" style="left:106px;top:4px;width:39px">Valore</div>
<div class="t" style="left:157px;top:4px">UM</div>
<div class="t" style="left:193px;top:4px">%k...</div>
<div class="t" style="left:259px;top:4px">Bilancio</div>
<div class="t" style="left:334px;top:4px">Informazioni</div>
</div>
<div class="a" style="left:90px;top:655px;width:372px;height:198px;overflow:hidden">
<div class="a" style="left:107px;top:25px;width:44px;height:16px;background:#ffe68c"></div>
<div class="t" style="left:6px;top:25px">Calorie</div>
<div class="t r" style="left:107px;top:25px;width:39px">456</div>
<div class="t" style="left:156px;top:25px">kcal</div>
<svg class="a" style="left:231px;top:26px" width="14" height="14" viewBox="0 0 14 14"><defs><linearGradient id="do0" x1="0" y1="0" x2="1" y2="1"><stop offset="0" stop-color="#b4c2ff"/><stop offset="1" stop-color="#1a3cff"/></linearGradient><linearGradient id="di0" x1="0" y1="0" x2="1" y2="1"><stop offset="0.2" stop-color="#2a4cff"/><stop offset="1" stop-color="#b0bcff"/></linearGradient></defs><circle cx="7" cy="7" r="6.9" fill="url(#do0)"/><circle cx="7" cy="7" r="5.1" fill="url(#di0)"/></svg>
<div class="t" style="left:258px;top:25px">&lt;&lt; Minimo</div>
<div class="a" style="left:107px;top:42px;width:44px;height:16px;background:#e1f0ff"></div>
<div class="t" style="left:6px;top:42px">Proteine</div>
<div class="t r" style="left:107px;top:42px;width:39px">71</div>
<div class="t" style="left:156px;top:42px">g</div>
<div class="t r" style="left:187px;top:42px;width:30px">59 %</div>
<svg class="a" style="left:231px;top:43px" width="14" height="14" viewBox="0 0 14 14"><defs><linearGradient id="do1" x1="0" y1="0" x2="1" y2="1"><stop offset="0" stop-color="#ffb4b4"/><stop offset="1" stop-color="#ff1010"/></linearGradient><linearGradient id="di1" x1="0" y1="0" x2="1" y2="1"><stop offset="0.2" stop-color="#ff2a2a"/><stop offset="1" stop-color="#ffbcbc"/></linearGradient></defs><circle cx="7" cy="7" r="6.9" fill="url(#do1)"/><circle cx="7" cy="7" r="5.1" fill="url(#di1)"/></svg>
<div class="t" style="left:258px;top:42px">&gt;&gt; Massimo</div>
<div class="a" style="left:107px;top:59px;width:44px;height:16px;background:#b4ffb4"></div>
<div class="t" style="left:6px;top:59px">Carboidrati (Tot.)</div>
<div class="t r" style="left:107px;top:59px;width:39px">16</div>
<div class="t" style="left:156px;top:59px">g</div>
<div class="t r" style="left:187px;top:59px;width:30px">13 %</div>
<svg class="a" style="left:231px;top:60px" width="14" height="14" viewBox="0 0 14 14"><defs><linearGradient id="do2" x1="0" y1="0" x2="1" y2="1"><stop offset="0" stop-color="#b4c2ff"/><stop offset="1" stop-color="#1a3cff"/></linearGradient><linearGradient id="di2" x1="0" y1="0" x2="1" y2="1"><stop offset="0.2" stop-color="#2a4cff"/><stop offset="1" stop-color="#b0bcff"/></linearGradient></defs><circle cx="7" cy="7" r="6.9" fill="url(#do2)"/><circle cx="7" cy="7" r="5.1" fill="url(#di2)"/></svg>
<div class="t" style="left:258px;top:59px">&lt;&lt; Minimo</div>
<div class="t" style="left:333px;top:59px">Totale carboidrati</div>
<div class="a" style="left:107px;top:76px;width:44px;height:16px;background:#e1ff9b"></div>
<div class="a" style="left:12px;top:80px;width:7px;height:6px;border-left:1px solid #111;border-bottom:1px solid #111"></div>
<div class="t" style="left:18px;top:76px">Zuccheri</div>
<div class="t r" style="left:107px;top:76px;width:39px">16</div>
<div class="t" style="left:156px;top:76px">g</div>
<div class="t r" style="left:187px;top:76px;width:30px">13 %</div>
<svg class="a" style="left:231px;top:77px" width="14" height="14" viewBox="0 0 14 14"><defs><linearGradient id="do3" x1="0" y1="0" x2="1" y2="1"><stop offset="0" stop-color="#b4dcb4"/><stop offset="1" stop-color="#1a8a1a"/></linearGradient><linearGradient id="di3" x1="0" y1="0" x2="1" y2="1"><stop offset="0.2" stop-color="#2a962a"/><stop offset="1" stop-color="#b8e0b8"/></linearGradient></defs><circle cx="7" cy="7" r="6.9" fill="url(#do3)"/><circle cx="7" cy="7" r="5.1" fill="url(#di3)"/></svg>
<div class="t" style="left:258px;top:76px">OK</div>
<div class="t" style="left:333px;top:76px">Carboidrati semplici</div>
<div class="a" style="left:107px;top:93px;width:44px;height:16px;background:#ffdcff"></div>
<div class="t" style="left:6px;top:93px">Grassi totali (Tot.)</div>
<div class="t r" style="left:107px;top:93px;width:39px">15</div>
<div class="t" style="left:156px;top:93px">g</div>
<div class="t r" style="left:187px;top:93px;width:30px">27 %</div>
<svg class="a" style="left:231px;top:94px" width="14" height="14" viewBox="0 0 14 14"><defs><linearGradient id="do4" x1="0" y1="0" x2="1" y2="1"><stop offset="0" stop-color="#b4dcb4"/><stop offset="1" stop-color="#1a8a1a"/></linearGradient><linearGradient id="di4" x1="0" y1="0" x2="1" y2="1"><stop offset="0.2" stop-color="#2a962a"/><stop offset="1" stop-color="#b8e0b8"/></linearGradient></defs><circle cx="7" cy="7" r="6.9" fill="url(#do4)"/><circle cx="7" cy="7" r="5.1" fill="url(#di4)"/></svg>
<div class="t" style="left:258px;top:93px">OK</div>
<div class="t" style="left:333px;top:93px">Totale acidi grassi</div>
<div class="a" style="left:107px;top:110px;width:44px;height:16px;background:#ffb2f5"></div>
<div class="a" style="left:12px;top:114px;width:7px;height:6px;border-left:1px solid #111;border-bottom:1px solid #111"></div>
<div class="t" style="left:18px;top:110px">Gr.saturi</div>
<div class="t r" style="left:107px;top:110px;width:39px">2</div>
<div class="t" style="left:156px;top:110px">g</div>
<div class="t r" style="left:187px;top:110px;width:30px">4 %</div>
<svg class="a" style="left:231px;top:111px" width="14" height="14" viewBox="0 0 14 14"><defs><linearGradient id="do5" x1="0" y1="0" x2="1" y2="1"><stop offset="0" stop-color="#b4dcb4"/><stop offset="1" stop-color="#1a8a1a"/></linearGradient><linearGradient id="di5" x1="0" y1="0" x2="1" y2="1"><stop offset="0.2" stop-color="#2a962a"/><stop offset="1" stop-color="#b8e0b8"/></linearGradient></defs><circle cx="7" cy="7" r="6.9" fill="url(#do5)"/><circle cx="7" cy="7" r="5.1" fill="url(#di5)"/></svg>
<div class="t" style="left:258px;top:110px">OK</div>
<div class="t" style="left:333px;top:110px">Acidi grassi saturi</div>
</div>
<div class="a" style="left:90px;top:853px;width:372px;height:17px;background:#eaeaea"></div>
<svg class="a" style="left:96px;top:858px" width="5" height="8" viewBox="0 0 5 8"><path d="M4.5 0 L4.5 8 L0.5 4Z" fill="#444"/></svg>
<svg class="a" style="left:450px;top:858px" width="5" height="8" viewBox="0 0 5 8"><path d="M0.5 0 L0.5 8 L4.5 4Z" fill="#444"/></svg>
<div class="a" style="left:109px;top:854px;width:276px;height:15px;border:1px solid #959595;border-radius:2px;background:linear-gradient(#f2f2f2,#e0e0e0 50%,#cfcfcf)"></div>
<div class="a" style="left:243px;top:858px;width:7px;height:7px;background:repeating-linear-gradient(90deg,#555 0,#555 1px,transparent 1px,transparent 3px)"></div>
<div class="a" style="left:469px;top:654px;width:219px;height:217px;border:1px solid #000;background:#fff"></div>
<svg class="a" style="left:469px;top:654px" width="219" height="217" viewBox="0 0 219 217"><path d="M109.60 108.60 L169.10 108.60 A59.5 59.5 0 1 1 59.70 76.19 Z" fill="#0029a6" stroke="#000" stroke-width="1"/><path d="M93.12 82.93 L43.22 50.53 A59.5 59.5 0 0 1 84.43 24.07 Z" fill="#b5cc00" stroke="#000" stroke-width="1"/><path d="M109.60 108.60 L100.91 49.74 A59.5 59.5 0 0 1 166.94 92.70 Z" fill="#a30028" stroke="#000" stroke-width="1"/><path d="M140.12 104.45 L197.45 88.55 A59.5 59.5 0 0 1 199.62 104.45 Z" fill="#c800a0" stroke="#000" stroke-width="1"/><rect x="17.5" y="25.5" width="35" height="7" fill="#fff"/><rect x="17.5" y="25.5" width="35" height="7" fill="none" stroke="#000" stroke-width="1"/><text x="35.0" y="31.4" font-family="Liberation Sans" font-size="6.8" font-weight="bold" text-anchor="middle" fill="#000" textLength="32.5" lengthAdjust="spacingAndGlyphs">Zuccheri 13%</text><path d="M52.5 29 H58 L61 33" stroke="#000" fill="none" stroke-width="0.8"/><rect x="151.5" y="50.5" width="66" height="7" fill="#fff"/><path d="M217.5 50.5 H151.5 V57.5 H217.5" fill="none" stroke="#000" stroke-width="1"/><text x="184.5" y="56.4" font-family="Liberation Sans" font-size="6.8" font-weight="bold" text-anchor="middle" fill="#000" textLength="63.5" lengthAdjust="spacingAndGlyphs">Grassi totali (Parz.) 23%</text><path d="M151 54 H146 L142 58" stroke="#000" fill="none" stroke-width="0.8"/><rect x="48.5" y="167.5" width="37" height="7" fill="#fff"/><rect x="48.5" y="167.5" width="37" height="7" fill="none" stroke="#000" stroke-width="1"/><text x="67.0" y="173.4" font-family="Liberation Sans" font-size="6.8" font-weight="bold" text-anchor="middle" fill="#000" textLength="34.5" lengthAdjust="spacingAndGlyphs">Proteine 59%</text><path d="M85 171 H90 L92 167" stroke="#000" fill="none" stroke-width="0.8"/><path d="M199 96 L210 95 M210.5 86 V106" stroke="#000" fill="none" stroke-width="1"/></svg>
<div class="a" style="left:696px;top:637px;width:257px;height:238px;border:1px solid #646464;background:#eef3f8"></div>
<div class="a" style="left:697px;top:638px;width:255px;height:13px;background:#000080"></div>
<div class="t c n" style="left:697px;top:637px;width:255px;font-size:12px;line-height:15px;font-weight:bold;color:#fff">Totali - martedì 28 agosto 2012</div>
<div class="a" style="left:700px;top:654px;width:249px;height:216px;border:1px solid #000;background:#eef1f5"></div>
<div class="hd" style="left:702px;top:656px;width:245px;height:17px"></div>
<div class="a" style="left:702px;top:673px;width:245px;height:1px;background:#d5d5d5"></div>
<div class="a" style="left:701px;top:675px;width:247px;height:177px;background:#fff"></div>
<div class="a" style="left:701px;top:675px;width:247px;height:1px;background:#a0a0a0"></div>
<div class="a" style="left:701px;top:697px;width:247px;height:1px;background:#a0a0a0"></div>
<div class="a" style="left:701px;top:719px;width:247px;height:1px;background:#a0a0a0"></div>
<div class="a" style="left:701px;top:741px;width:247px;height:1px;background:#a0a0a0"></div>
<div class="a" style="left:701px;top:763px;width:247px;height:1px;background:#a0a0a0"></div>
<div class="a" style="left:701px;top:785px;width:247px;height:1px;background:#a0a0a0"></div>
<div class="a" style="left:701px;top:807px;width:247px;height:1px;background:#a0a0a0"></div>
<div class="a" style="left:701px;top:829px;width:247px;height:1px;background:#a0a0a0"></div>
<div class="a" style="left:701px;top:851px;width:247px;height:1px;background:#a0a0a0"></div>
<div class="a" style="left:744px;top:657px;width:1px;height:16px;background:#e3e3e3"></div>
<div class="a" style="left:744px;top:675px;width:1px;height:177px;background:#a0a0a0"></div>
<div class="a" style="left:765px;top:657px;width:1px;height:16px;background:#e3e3e3"></div>
<div class="a" style="left:765px;top:675px;width:1px;height:177px;background:#a0a0a0"></div>
<div class="t" style="left:709px;top:657px">Valore</div>
<div class="t" style="left:773px;top:657px">Descrizione</div>
<div class="t r" style="left:701px;top:678px;width:39px">68,0</div>
<svg class="a" style="left:747.5px;top:679.5px" width="14" height="14" viewBox="0 0 14 14"><circle cx="7" cy="7" r="6.7" fill="#0b7c12"/><path d="M4.7 5.3 Q4.7 2.7 7 2.7 Q9.4 2.7 9.4 4.8 Q9.4 6.1 8.1 6.8 Q7 7.4 7 8.7" stroke="#fff" stroke-width="1.9" fill="none"/><circle cx="7" cy="10.9" r="1.15" fill="#fff"/></svg>
<div class="t" style="left:769px;top:678px">Peso corporeo (Kg)</div>
<div class="t r" style="left:701px;top:700px;width:39px">2634</div>
<svg class="a" style="left:747.5px;top:701.5px" width="14" height="14" viewBox="0 0 14 14"><circle cx="7" cy="7" r="6.7" fill="#0b7c12"/><path d="M4.7 5.3 Q4.7 2.7 7 2.7 Q9.4 2.7 9.4 4.8 Q9.4 6.1 8.1 6.8 Q7 7.4 7 8.7" stroke="#fff" stroke-width="1.9" fill="none"/><circle cx="7" cy="10.9" r="1.15" fill="#fff"/></svg>
<div class="t" style="left:769px;top:700px">Dieta proposta (kcal)</div>
<svg class="a" style="left:747.5px;top:723.5px" width="14" height="14" viewBox="0 0 14 14"><circle cx="7" cy="7" r="6.7" fill="#0b7c12"/><path d="M4.7 5.3 Q4.7 2.7 7 2.7 Q9.4 2.7 9.4 4.8 Q9.4 6.1 8.1 6.8 Q7 7.4 7 8.7" stroke="#fff" stroke-width="1.9" fill="none"/><circle cx="7" cy="10.9" r="1.15" fill="#fff"/></svg>
<div class="t" style="left:769px;top:722px">Calorie sport</div>
<div class="t r" style="left:701px;top:744px;width:39px">1.711</div>
<svg class="a" style="left:747.5px;top:745.5px" width="14" height="14" viewBox="0 0 14 14"><circle cx="7" cy="7" r="6.7" fill="#0b7c12"/><path d="M4.7 5.3 Q4.7 2.7 7 2.7 Q9.4 2.7 9.4 4.8 Q9.4 6.1 8.1 6.8 Q7 7.4 7 8.7" stroke="#fff" stroke-width="1.9" fill="none"/><circle cx="7" cy="10.9" r="1.15" fill="#fff"/></svg>
<div class="t" style="left:769px;top:744px">BMR Metabolismo basale (kcal)</div>
<div class="t r" style="left:701px;top:766px;width:39px">2.395</div>
<svg class="a" style="left:747.5px;top:767.5px" width="14" height="14" viewBox="0 0 14 14"><circle cx="7" cy="7" r="6.7" fill="#0b7c12"/><path d="M4.7 5.3 Q4.7 2.7 7 2.7 Q9.4 2.7 9.4 4.8 Q9.4 6.1 8.1 6.8 Q7 7.4 7 8.7" stroke="#fff" stroke-width="1.9" fill="none"/><circle cx="7" cy="10.9" r="1.15" fill="#fff"/></svg>
<div class="t" style="left:769px;top:766px">DCN Fabbisogno giornaliero (kcal)</div>
<div class="t r" style="left:701px;top:788px;width:39px">2.395</div>
<svg class="a" style="left:747.5px;top:789.5px" width="14" height="14" viewBox="0 0 14 14"><circle cx="7" cy="7" r="6.7" fill="#0b7c12"/><path d="M4.7 5.3 Q4.7 2.7 7 2.7 Q9.4 2.7 9.4 4.8 Q9.4 6.1 8.1 6.8 Q7 7.4 7 8.7" stroke="#fff" stroke-width="1.9" fill="none"/><circle cx="7" cy="10.9" r="1.15" fill="#fff"/></svg>
<div class="t" style="left:769px;top:788px">TDEE Total Daily Energy Expendit...</div>
<div class="t r" style="left:701px;top:810px;width:39px">2.638</div>
<svg class="a" style="left:747.5px;top:811.5px" width="14" height="14" viewBox="0 0 14 14"><circle cx="7" cy="7" r="6.7" fill="#0b7c12"/><path d="M4.7 5.3 Q4.7 2.7 7 2.7 Q9.4 2.7 9.4 4.8 Q9.4 6.1 8.1 6.8 Q7 7.4 7 8.7" stroke="#fff" stroke-width="1.9" fill="none"/><circle cx="7" cy="10.9" r="1.15" fill="#fff"/></svg>
<div class="t" style="left:769px;top:810px">Assimilate (kcal)</div>
<div class="t r" style="left:701px;top:832px;width:39px">243</div>
<svg class="a" style="left:747.5px;top:833.5px" width="14" height="14" viewBox="0 0 14 14"><circle cx="7" cy="7" r="6.7" fill="#0b7c12"/><path d="M4.7 5.3 Q4.7 2.7 7 2.7 Q9.4 2.7 9.4 4.8 Q9.4 6.1 8.1 6.8 Q7 7.4 7 8.7" stroke="#fff" stroke-width="1.9" fill="none"/><circle cx="7" cy="10.9" r="1.15" fill="#fff"/></svg>
<div class="t" style="left:769px;top:832px">Bilancio (kcal)</div>
</body></html>
